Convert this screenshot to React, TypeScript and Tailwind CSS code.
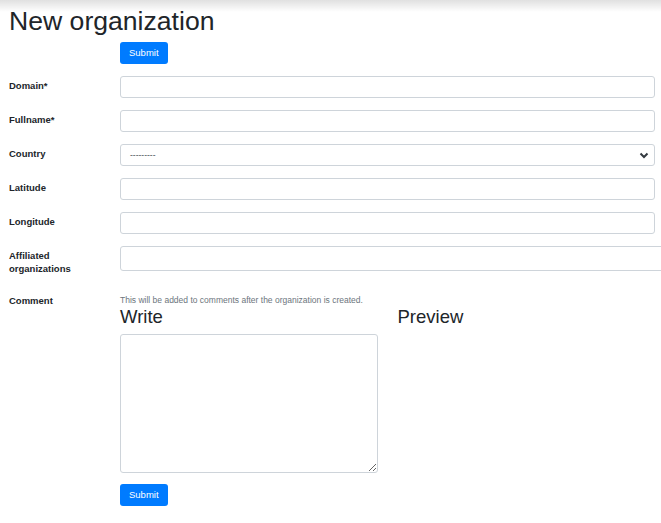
import React from "react";

const font = { fontFamily: '"Liberation Sans", Arial, sans-serif' };

function Row({ label, children, extra = "" }: { label: React.ReactNode; children: React.ReactNode; extra?: string }) {
  return (
    <div className={`grid grid-cols-[111px_1fr] mb-[12px] ${extra}`}>
      <div className="pt-[3px] pb-[4px] text-[9.5px] leading-[13px] font-bold text-[#212529]">{label}</div>
      <div>{children}</div>
    </div>
  );
}

function Input() {
  return <div className="h-[22px] w-full border border-[#ced4da] rounded-[3px] bg-white" />;
}

export default function App() {
  return (
    <div className="relative w-[661px] min-h-[523px] overflow-hidden bg-white text-[#212529]" style={font}>
      <div className="pointer-events-none absolute left-0 right-0 top-0 h-[12px] bg-gradient-to-b from-[rgba(0,0,0,0.12)] to-transparent" />
      <div className="pl-[9px] pr-[6px] pt-[6px]">
        <h1 className="text-[26.6px] leading-[31px] font-normal text-[#212529]">New organization</h1>
        <div className="grid grid-cols-[111px_1fr] mt-[2px] mb-[12px]">
          <div />
          <div>
            <button className="h-[22px] px-[9px] rounded-[3px] bg-[#007bff] text-white text-[9.5px] leading-[22px]">Submit</button>
          </div>
        </div>
        <Row label="Domain*"><Input /></Row>
        <Row label="Fullname*"><Input /></Row>
        <Row label="Country">
          <div className="h-[22px] w-full border border-[#ced4da] rounded-[3px] bg-white flex items-center justify-between pl-[9px] pr-[5px]">
            <span className="text-[8.5px] text-[#495057]">---------</span>
            <svg width="10" height="8" viewBox="0 0 10 8">
              <path d="M1.5 2.5 L5 6 L8.5 2.5" stroke="#343a40" strokeWidth="2" fill="none" />
            </svg>
          </div>
        </Row>
        <Row label="Latitude"><Input /></Row>
        <Row label="Longitude"><Input /></Row>
        <Row label={<>Affiliated<br />organizations</>}>
          <div className="h-[25px] w-[600px] border border-[#ced4da] rounded-[3px] bg-white" />
        </Row>
        <div className="grid grid-cols-[111px_1fr]">
          <div className="pt-[3px] text-[9.5px] leading-[13px] font-bold">Comment</div>
          <div className="pt-[3px]">
            <div className="text-[8.5px] leading-[12px] text-[#6c757d]">This will be added to comments after the organization is created.</div>
            <div className="grid grid-cols-2 gap-x-[20px]">
              <div>
                <div className="text-[18.5px] leading-[22px] mb-[6px]">Write</div>
                <textarea className="block w-full h-[139px] border border-[#ced4da] rounded-[3px] bg-white outline-none" />
              </div>
              <div>
                <div className="text-[18.5px] leading-[22px]">Preview</div>
              </div>
            </div>
            <button className="mt-[11px] h-[22px] px-[9px] rounded-[3px] bg-[#007bff] text-white text-[9.5px] leading-[22px]">Submit</button>
          </div>
        </div>
      </div>
    </div>
  );
}
